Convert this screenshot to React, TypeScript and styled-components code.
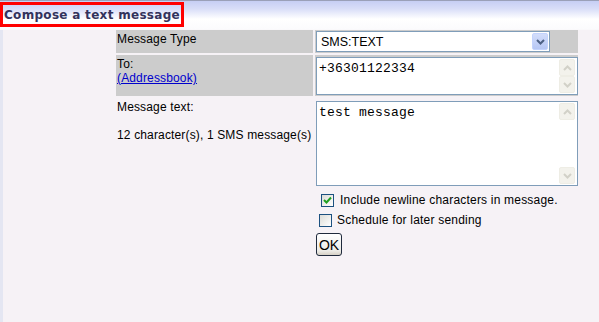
import styled, { createGlobalStyle } from 'styled-components';

const GlobalStyle = createGlobalStyle`
  html, body {
    margin: 0;
    padding: 0;
    background: #f6f2f6;
    font-family: 'Liberation Sans', Arial, sans-serif;
    font-size: 12px;
    color: #000;
  }
`;

const Page = styled.div`
  min-height: 322px;
  border-left: 3px solid #e4e6f2;
  box-sizing: border-box;
`;

const Header = styled.div`
  height: 30px;
  box-sizing: border-box;
  border-top: 1px solid #9aa0b8;
  margin-left: -3px;
  background: linear-gradient(#c6cef4 0px, #d9def8 8px, #ffffff 18px, #fbfbfd 28px, #f6f2f6 30px);
`;

const TitleBox = styled.div`
  display: inline-flex;
  align-items: center;
  box-sizing: border-box;
  height: 25px;
  width: 184px;
  margin-top: 1px;
  padding-left: 1px;
  border: 3px solid #ff0000;
  font-family: 'DejaVu Sans', Verdana, sans-serif;
  font-weight: bold;
  font-size: 12px;
  letter-spacing: 0.3px;
  color: #33335c;
  white-space: nowrap;
`;

const Form = styled.div`
  display: grid;
  grid-template-columns: 197px 263px;
  column-gap: 2px;
  row-gap: 2px;
  margin-left: 113px;
  width: 462px;
`;

const Label = styled.div<{ shaded?: boolean }>`
  background: ${({ shaded }) => (shaded ? '#cccccc' : 'transparent')};
  padding: 2px 1px 0;
  line-height: 14px;
  letter-spacing: 0.15px;
  white-space: nowrap;
`;

const Value = styled.div<{ shaded?: boolean; pad?: string }>`
  background: ${({ shaded }) => (shaded ? '#cccccc' : 'transparent')};
  padding: ${({ pad }) => pad || '1px 0 1px 1px'};
`;

const Link = styled.a`
  color: #0000cc;
  text-decoration: underline;
`;

const SelectBox = styled.div`
  display: flex;
  align-items: center;
  justify-content: space-between;
  box-sizing: border-box;
  width: 234px;
  height: 21px;
  border: 1px solid #7f9db9;
  background: #fff;
  padding: 0 1px 0 4px;
  font-size: 12.5px;
`;

const DropButton = styled.div`
  width: 16px;
  height: 17px;
  border-radius: 2px;
  background: linear-gradient(#d3ddfb, #b6c7f4);
  border: 1px solid #c3d3fd;
  box-sizing: border-box;
  display: flex;
  align-items: center;
  justify-content: center;
`;

const TextBox = styled.div<{ h: number }>`
  position: relative;
  box-sizing: border-box;
  width: 262px;
  height: ${({ h }) => h}px;
  border: 1px solid #7f9db9;
  background: #fff;
  padding: 3px 20px 0 2px;
  font-family: 'Liberation Mono', 'Courier New', monospace;
  font-size: 13px;
  letter-spacing: 0.2px;
  line-height: 15px;
`;

const ScrollBar = styled.div`
  position: absolute;
  top: 1px;
  right: 1px;
  bottom: 1px;
  width: 17px;
  display: flex;
  flex-direction: column;
  justify-content: space-between;
`;

const ScrollBtn = styled.div`
  width: 16px;
  height: 17px;
  box-sizing: border-box;
  border: 1px solid #eeede5;
  border-radius: 2px;
  background: #f3f2ec;
  display: flex;
  align-items: center;
  justify-content: center;
`;

const Options = styled.div`
  grid-column: 2;
  display: flex;
  flex-direction: column;
  padding-top: 2px;
`;

const CheckRow = styled.label<{ indent: number; textGap: number }>`
  display: flex;
  align-items: center;
  height: 20px;
  padding-left: ${({ indent }) => indent}px;
  gap: ${({ textGap }) => textGap}px;
  letter-spacing: 0.2px;
`;

const CheckBox = styled.span`
  width: 13px;
  height: 13px;
  box-sizing: border-box;
  border: 1px solid #1c5180;
  background: linear-gradient(135deg, #dcdcd7, #ffffff);
  display: flex;
  align-items: center;
  justify-content: center;
`;

const OkButton = styled.button`
  margin: 3px 0 0 1px;
  width: 26px;
  height: 23px;
  padding: 0;
  border: 1px solid #1f2a3c;
  border-radius: 3px;
  background: linear-gradient(#ffffff, #ecebe6 80%, #d6d0c5);
  font-family: 'Liberation Sans', Arial, sans-serif;
  font-size: 14px;
  color: #000;
`;

const Chevron = ({ up, color }: { up?: boolean; color: string }) => (
  <svg width="9" height="6" viewBox="0 0 9 6">
    <path
      d={up ? 'M1 5 L4.5 1.5 L8 5' : 'M1 1 L4.5 4.5 L8 1'}
      stroke={color}
      strokeWidth="2"
      fill="none"
    />
  </svg>
);

const Scroll = () => (
  <ScrollBar>
    <ScrollBtn>
      <Chevron up color="#d2d1c8" />
    </ScrollBtn>
    <ScrollBtn>
      <Chevron color="#d2d1c8" />
    </ScrollBtn>
  </ScrollBar>
);

const Check = ({ checked }: { checked?: boolean }) => (
  <CheckBox>
    {checked && (
      <svg width="9" height="9" viewBox="0 0 9 9">
        <path d="M1 4 L3.5 6.5 L8 1.5" stroke="#21a121" strokeWidth="2" fill="none" />
      </svg>
    )}
  </CheckBox>
);

const App = () => (
  <Page>
    <GlobalStyle />
    <Header>
      <TitleBox>Compose a text message</TitleBox>
    </Header>
    <Form>
      <Label shaded>Message Type</Label>
      <Value shaded>
        <SelectBox>
          <span>SMS:TEXT</span>
          <DropButton>
            <Chevron color="#4d6185" />
          </DropButton>
        </SelectBox>
      </Value>

      <Label shaded>
        To:
        <br />
        <Link href="#">(Addressbook)</Link>
      </Label>
      <Value shaded pad="2px 0 1px 1px">
        <TextBox h={38}>
          +36301122334
          <Scroll />
        </TextBox>
      </Value>

      <Label>
        Message text:
        <br />
        <br />
        12 character(s), 1 SMS message(s)
      </Label>
      <Value pad="3px 0 0 1px">
        <TextBox h={85}>
          test message
          <Scroll />
        </TextBox>
      </Value>

      <Options>
        <CheckRow indent={6} textGap={6}>
          <Check checked />
          Include newline characters in message.
        </CheckRow>
        <CheckRow indent={4} textGap={5}>
          <Check />
          Schedule for later sending
        </CheckRow>
        <div>
          <OkButton>OK</OkButton>
        </div>
      </Options>
    </Form>
  </Page>
);

export default App;
